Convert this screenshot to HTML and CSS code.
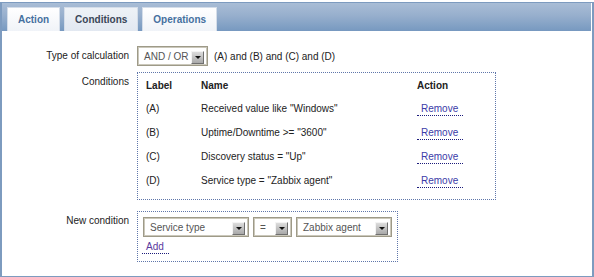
FILE: index.html
```html
<!DOCTYPE html>
<html lang="en">
<head>
    <meta charset="UTF-8">
    <title>Action conditions</title>
    <link rel="stylesheet" href="styles.css">
</head>
<body>
    <div class="frame">
        <div class="tabs">
            <span class="tab">Action</span>
            <span class="tab tab-active">Conditions</span>
            <span class="tab">Operations</span>
        </div>
        <div class="form">
            <div class="form-label form-label-mid">Type of calculation</div>
            <div class="form-field calc">
                <span class="select select-calc">AND / OR<i class="arrow"></i></span>
                <span class="formula">(A) and (B) and (C) and (D)</span>
            </div>

            <div class="form-label">Conditions</div>
            <div class="form-field">
                <div class="box box-conditions">
                    <table class="conditions">
                        <tr class="head">
                            <th class="col-label">Label</th>
                            <th class="col-name">Name</th>
                            <th>Action</th>
                        </tr>
                        <tr>
                            <td>(A)</td>
                            <td>Received value like "Windows"</td>
                            <td><a class="link" href="#">Remove</a></td>
                        </tr>
                        <tr>
                            <td>(B)</td>
                            <td>Uptime/Downtime &gt;= "3600"</td>
                            <td><a class="link" href="#">Remove</a></td>
                        </tr>
                        <tr>
                            <td>(C)</td>
                            <td>Discovery status = "Up"</td>
                            <td><a class="link" href="#">Remove</a></td>
                        </tr>
                        <tr>
                            <td>(D)</td>
                            <td>Service type = "Zabbix agent"</td>
                            <td><a class="link" href="#">Remove</a></td>
                        </tr>
                    </table>
                </div>
            </div>

            <div class="form-label form-label-new">New condition</div>
            <div class="form-field form-field-new">
                <div class="box box-new">
                    <div class="selects">
                        <span class="select select-type">Service type<i class="arrow"></i></span>
                        <span class="select select-op">=<i class="arrow"></i></span>
                        <span class="select select-value">Zabbix agent<i class="arrow"></i></span>
                    </div>
                    <a class="link link-add" href="#">Add</a>
                </div>
            </div>
        </div>
    </div>
</body>
</html>
```

FILE: styles.css
```css
body {
    margin: 0;
    font-family: "Liberation Sans", Arial, sans-serif;
    font-size: 10px;
    color: #222;
    background: #fff;
}
.frame {
    box-sizing: border-box;
    margin-top: 2px;
    height: 275px;
    border: 1px solid #7d9bbf;
    border-left-width: 2px;
    border-right-width: 2px;
}
.tabs {
    display: flex;
    align-items: flex-end;
    gap: 4px;
    height: 28px;
    padding-left: 5px;
    margin-right: 1px;
    background: linear-gradient(#a9bdd6, #97afcd 45%, #7799c0);
}
.tab {
    box-sizing: border-box;
    height: 24px;
    line-height: 23px;
    padding: 0 10px;
    border: 1px solid #d4dde9;
    border-bottom: none;
    background: linear-gradient(#ffffff, #f0f3f8);
    color: #45709f;
    font-weight: bold;
}
.tab-active {
    background: linear-gradient(#eef2f7, #e2e8f1);
    color: #3a4658;
}
.form {
    display: grid;
    grid-template-columns: 127px 1fr;
    column-gap: 8px;
    row-gap: 6px;
    padding-top: 15px;
}
.form-label {
    text-align: right;
    line-height: 12px;
    padding-top: 4px;
}
.form-label-mid {
    padding-top: 0;
    align-self: center;
}
.form-label-new,
.form-field-new {
    margin-top: 5px;
}
.calc {
    display: flex;
    align-items: center;
    gap: 6px;
}
.select {
    box-sizing: border-box;
    display: inline-flex;
    align-items: center;
    justify-content: space-between;
    height: 20px;
    padding: 0 3px 0 6px;
    border: 1px solid #9e9a88;
    box-shadow: inset 0 0 0 1px #cbc8bb;
    background: #fff;
    color: #555;
}
.select-calc {
    width: 71px;
}
.select-type {
    width: 106px;
}
.select-op {
    width: 39px;
}
.select-value {
    width: 96px;
}
.arrow {
    box-sizing: border-box;
    display: flex;
    align-items: center;
    justify-content: center;
    width: 13px;
    height: 13px;
    margin-top: 2px;
    border: 1px solid;
    border-color: #f4f4f4 #6f6f6f #6f6f6f #f4f4f4;
    background: linear-gradient(#dcdcdc, #a9a9a9);
}
.arrow::after {
    content: "";
    border-left: 3px solid transparent;
    border-right: 3px solid transparent;
    border-top: 3px solid #111;
}
.box {
    box-sizing: border-box;
    border: 1px dotted #5f76aa;
}
.box-conditions {
    width: 359px;
    height: 128px;
    padding: 1px 8px 0 8px;
}
.conditions {
    border-collapse: collapse;
    width: 100%;
}
.conditions th,
.conditions td {
    padding: 0;
    text-align: left;
    vertical-align: middle;
    line-height: 12px;
}
.conditions td {
    height: 24px;
}
.conditions .head th {
    height: 23px;
}
.col-label {
    width: 55px;
}
.col-name {
    width: 216px;
}
.link {
    display: inline-block;
    line-height: 12px;
    padding: 0 5px 0 4px;
    color: #3b3ca8;
    text-decoration: none;
    border-bottom: 1px dotted #1c1c7c;
}
.box-new {
    width: 261px;
    height: 51px;
    padding: 5px 4px 0 4px;
}
.selects {
    display: flex;
    gap: 4px;
    margin-left: 1px;
}
.link-add {
    margin-top: 4px;
    color: #5a3a9e;
}
```
